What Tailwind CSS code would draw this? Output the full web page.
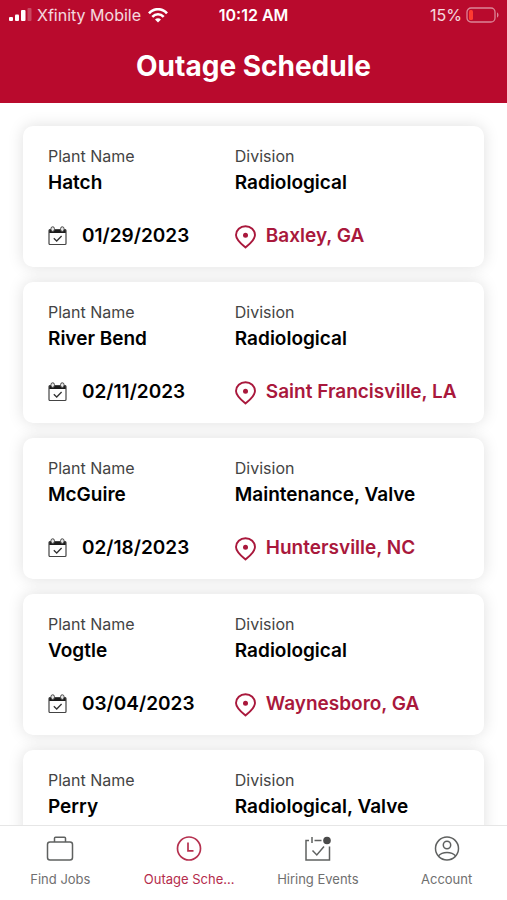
<!DOCTYPE html>
<html lang="en">
<head>
<meta charset="utf-8">
<meta name="viewport" content="width=device-width, initial-scale=1">
<title>Outage Schedule</title>
<script src="https://cdn.jsdelivr.net/npm/@tailwindcss/browser@4"></script>
</head>
<body class="flex h-screen flex-col overflow-hidden bg-white font-['Inter','Liberation_Sans',sans-serif] text-black">

<svg class="hidden" aria-hidden="true">
  <symbol id="calendar" viewBox="0 0 20 20">
    <path d="M1 3.500h17v3.500h-17z" fill="#1c1c1c"/>
    <rect x="1" y="3.500" width="17" height="15" rx="1" fill="none" stroke="#444" stroke-width="1.200"/>
    <rect x="3" y=".8" width="3.400" height="4.600" rx="1.700" fill="#e8e8e8" stroke="#444" stroke-width="1"/>
    <rect x="12.600" y=".8" width="3.400" height="4.600" rx="1.700" fill="#e8e8e8" stroke="#444" stroke-width="1"/>
    <path d="M5.800 12.300l2.900 2.700 4.900-5" fill="none" stroke="#333" stroke-width="1.300"/>
  </symbol>
  <symbol id="pin" viewBox="0 0 22 24">
    <path d="M10.500 22.500C7 19.500 1 15 1 10a9.500 8.800 0 0 1 19 0c0 5-6 9.500-9.500 12.500z" fill="none" stroke="currentColor" stroke-width="1.900" stroke-linejoin="round"/>
    <circle cx="10.500" cy="10.200" r="2.500" fill="currentColor"/>
  </symbol>
</svg>

<header class="shrink-0 bg-[#b90a2d] text-white">
  <div class="grid h-[30px] grid-cols-[1fr_auto_1fr] items-center px-2 text-base text-white/85">
    <div class="flex items-center gap-[5px]">
      <svg class="h-[14px] w-[24px]" viewBox="0 0 24 14" aria-label="Signal strength">
        <g fill="#fff"><rect x="1" y="9" width="4" height="4" rx="1"/><rect x="7" y="6.500" width="4" height="6.500" rx="1"/><rect x="13" y="2" width="4.500" height="11" rx="1"/><rect x="19.500" y="0" width="4" height="13" rx="1" opacity=".25"/></g>
      </svg>
      <span class="whitespace-nowrap">Xfinity Mobile</span>
      <svg class="ml-[2px] h-[15px] w-[20px]" viewBox="0 0 20 15" fill="none" stroke="#fff" stroke-width="2.600" aria-label="Wi-Fi">
        <path d="M1 5.300C6-.2 14-.2 19 5.300"/><path d="M4.300 8.800c3.300-3.400 8.100-3.400 11.400 0"/><path d="M10 14.500l-3-3.100c1.700-1.700 4.300-1.700 6 0z" fill="#fff" stroke="none"/>
      </svg>
    </div>
    <span class="font-semibold text-white">10:12 AM</span>
    <div class="flex items-center justify-end gap-1">
      <span>15%</span>
      <svg class="h-[17px] w-[33px]" viewBox="0 0 33 17" aria-label="Battery">
        <rect x="1" y="1" width="28" height="14" rx="4" fill="none" stroke="#fff" stroke-opacity=".5" stroke-width="1.300"/>
        <rect x="3" y="3" width="4" height="10" rx="1.500" fill="#ff3b30"/>
        <path d="M31 5.500c2 .5 2 4.500 0 5z" fill="#fff" fill-opacity=".5"/>
      </svg>
    </div>
  </div>
  <h1 class="pb-[1px] text-center text-[28px] leading-[72px] font-bold">Outage Schedule</h1>
</header>

<main class="min-h-0 flex-1 overflow-hidden px-[23px] pt-[23px]">
  <ul id="outages" class="flex flex-col gap-[15px]"></ul>
</main>

<nav class="h-[75px] shrink-0 border-t border-[#e6e6e6] bg-white text-[13px] text-[#6f6f6f]">
  <div class="-mx-1 grid grid-cols-4 pt-2">
    <a href="#" class="flex flex-col items-center gap-[6px]">
      <svg class="h-[30px] w-[30px]" viewBox="0 0 30 30" fill="none" stroke="#5f6160" stroke-width="1.500">
        <rect x="2.500" y="8" width="25" height="18" rx="2.500"/><path d="M9.500 8V4.200q0-1 1-1h9q1 0 1 1V8"/>
      </svg>
      <span>Find Jobs</span>
    </a>
    <a href="#" aria-current="page" class="flex flex-col items-center gap-[6px] text-[#b52c4c]">
      <svg class="h-[30px] w-[30px]" viewBox="0 0 30 30" fill="none" stroke="#b5304f" stroke-width="1.700">
        <circle cx="15" cy="14.500" r="11.500"/><path d="M14 8.500v8.300h5.500"/>
      </svg>
      <span>Outage Sche…</span>
    </a>
    <a href="#" class="flex flex-col items-center gap-[6px]">
      <svg class="h-[30px] w-[30px]" viewBox="0 0 30 30" fill="none" stroke="#5f6160" stroke-width="1.500">
        <path d="M6 6.500H3v19.500h23.500V12.500M9 3v6M11.500 6.500h7M9.500 16.500l4.300 4.500 7.200-8.500"/><circle cx="24" cy="6.500" r="3.800" fill="#4a4a4a" stroke="none"/>
      </svg>
      <span>Hiring Events</span>
    </a>
    <a href="#" class="flex flex-col items-center gap-[6px]">
      <svg class="h-[30px] w-[30px]" viewBox="0 0 30 30" fill="none" stroke="#5f6160" stroke-width="1.500">
        <circle cx="15" cy="14.500" r="11.500"/><circle cx="15" cy="11" r="3.700"/><path d="M6.300 22c4-4.700 13.400-4.700 17.400 0"/>
      </svg>
      <span>Account</span>
    </a>
  </div>
</nav>

<script>
const outages = [
  ["Hatch", "Radiological", "01/29/2023", "Baxley, GA"],
  ["River Bend", "Radiological", "02/11/2023", "Saint Francisville, LA"],
  ["McGuire", "Maintenance, Valve", "02/18/2023", "Huntersville, NC"],
  ["Vogtle", "Radiological", "03/04/2023", "Waynesboro, GA"],
  ["Perry", "Radiological, Valve", "", ""]
];
document.getElementById("outages").innerHTML = outages.map(([plant, division, date, place]) => `
  <li class="rounded-[10px] bg-white px-[25px] pt-[18px] pb-[19px] shadow-[0_0_16px_rgba(0,0,0,0.13)]">
    <dl class="grid grid-cols-[5fr_6fr]">
      <div><dt class="text-base leading-6 text-[#444]">Plant Name</dt><dd class="text-[19px] leading-[30px] font-semibold">${plant}</dd></div>
      <div><dt class="text-base leading-6 text-[#444]">Division</dt><dd class="text-[19px] leading-[30px] font-semibold">${division}</dd></div>
    </dl>
    ${date ? `<div class="mt-[26px] grid grid-cols-[5fr_6fr] text-[19px] leading-6 font-semibold">
      <div class="flex items-center gap-[14px]"><svg class="h-5 w-5 shrink-0"><use href="#calendar"/></svg><time>${date}</time></div>
      <a href="#" class="flex items-center gap-[9px] whitespace-nowrap text-[#a9183c]"><svg class="mt-[1px] -mb-[1px] h-6 w-[22px] shrink-0"><use href="#pin"/></svg>${place}</a>
    </div>` : ""}
  </li>`).join("");
</script>
</body>
</html>
